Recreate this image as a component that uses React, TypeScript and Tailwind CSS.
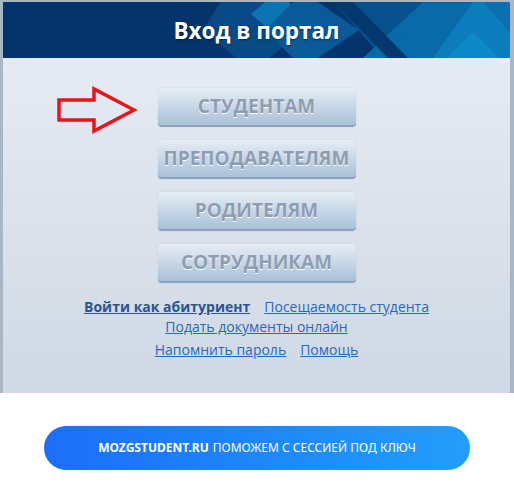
import React from "react";

const buttons = ["СТУДЕНТАМ", "ПРЕПОДАВАТЕЛЯМ", "РОДИТЕЛЯМ", "СОТРУДНИКАМ"];

function HeaderDecor() {
  return (
    <svg
      className="absolute inset-0 h-full w-full"
      viewBox="0 0 507 56"
      preserveAspectRatio="none"
    >
      <polygon points="230,-20 300,28 250,70 200,28" fill="#074a86" />
      <polygon points="274,-10 300,12 274,34 248,12" fill="#0b74b4" />
      <polygon points="300,-10 356,28 300,66 262,28" fill="#0a5998" />
      <polygon points="330,0 507,0 507,56 380,56" fill="#08518f" />
      <polygon points="420,0 507,0 507,56 360,56" fill="#0a6aa9" />
      <polygon points="470,0 507,0 507,56 430,56" fill="#0b7cbc" />
      <polygon points="330,0 350,0 405,56 385,56" fill="#04386e" />
      <polygon points="440,60 470,30 500,60" fill="#0a88c8" />
      <polygon points="480,0 507,0 507,30" fill="#0b6eae" />
      <circle cx="397" cy="32" r="4" fill="#0a6aa8" />
    </svg>
  );
}

function Arrow() {
  return (
    <svg width="82" height="50" viewBox="0 0 82 50" className="absolute left-[53px] top-[84px]">
      <polygon
        points="3,14 38,14 38,3 78,24 38,45 38,34 3,34"
        fill="none"
        stroke="#e8131b"
        strokeWidth="3.5"
        strokeLinejoin="miter"
      />
    </svg>
  );
}

export default function App() {
  return (
    <div className="w-[514px] h-[500px] bg-white" style={{ fontFamily: '"Open Sans", "Noto Sans", sans-serif' }}>
      <div className="bg-[#a9b6c6] pl-[3px] pr-[4px] pt-[2px]">
        <div className="relative">
          <div className="relative h-[56px] bg-[#04346b] overflow-hidden rounded-tr-[3px] flex items-center justify-center">
            <HeaderDecor />
            <h1 className="relative text-white text-[22.5px] font-bold [text-shadow:0_1px_2px_rgba(0,0,0,0.5)] mt-[1px]">
              Вход в портал
            </h1>
          </div>
          <div className="h-[335px] bg-gradient-to-b from-[#e6ebf3] to-[#cfd8e4] flex flex-col items-center pt-[30px]">
            <div className="flex flex-col gap-[13px]">
              {buttons.map((b) => (
                <div
                  key={b}
                  className="w-[198px] h-[39px] rounded-[4px] bg-gradient-to-b from-[#e6edf5] to-[#a9c1d8] border-b-2 border-[#8aa2bc] shadow-[0_0_1px_rgba(120,140,170,0.5)] flex items-center justify-center text-[19px] font-bold text-[#8e9db1] [text-shadow:0_1px_0_#ffffff]"
                >
                  {b}
                </div>
              ))}
            </div>
            <div className="mt-[14px] flex flex-col items-center text-[14px] text-[#2a68bd] leading-[20px]">
              <div className="flex gap-[14px]">
                <a className="underline font-bold text-[#2c5590]">Войти как абитуриент</a>
                <a className="underline">Посещаемость студента</a>
              </div>
              <a className="underline">Подать документы онлайн</a>
              <div className="flex gap-[14px] mt-[3px]">
                <a className="underline">Напомнить пароль</a>
                <a className="underline">Помощь</a>
              </div>
            </div>
          </div>
          <Arrow />
        </div>
      </div>
      <div className="flex justify-center pt-[33px]">
        <div
          className="w-[426px] h-[44px] rounded-full bg-gradient-to-r from-[#1d6ef8] to-[#239efb] flex items-center justify-center text-white text-[12px]"
          style={{ fontFamily: '"Noto Sans", "Open Sans", sans-serif' }}
        >
          <span className="font-bold">MOZGSTUDENT.RU</span>
          <span className="ml-[4px]">ПОМОЖЕМ С СЕССИЕЙ ПОД КЛЮЧ</span>
        </div>
      </div>
    </div>
  );
}
